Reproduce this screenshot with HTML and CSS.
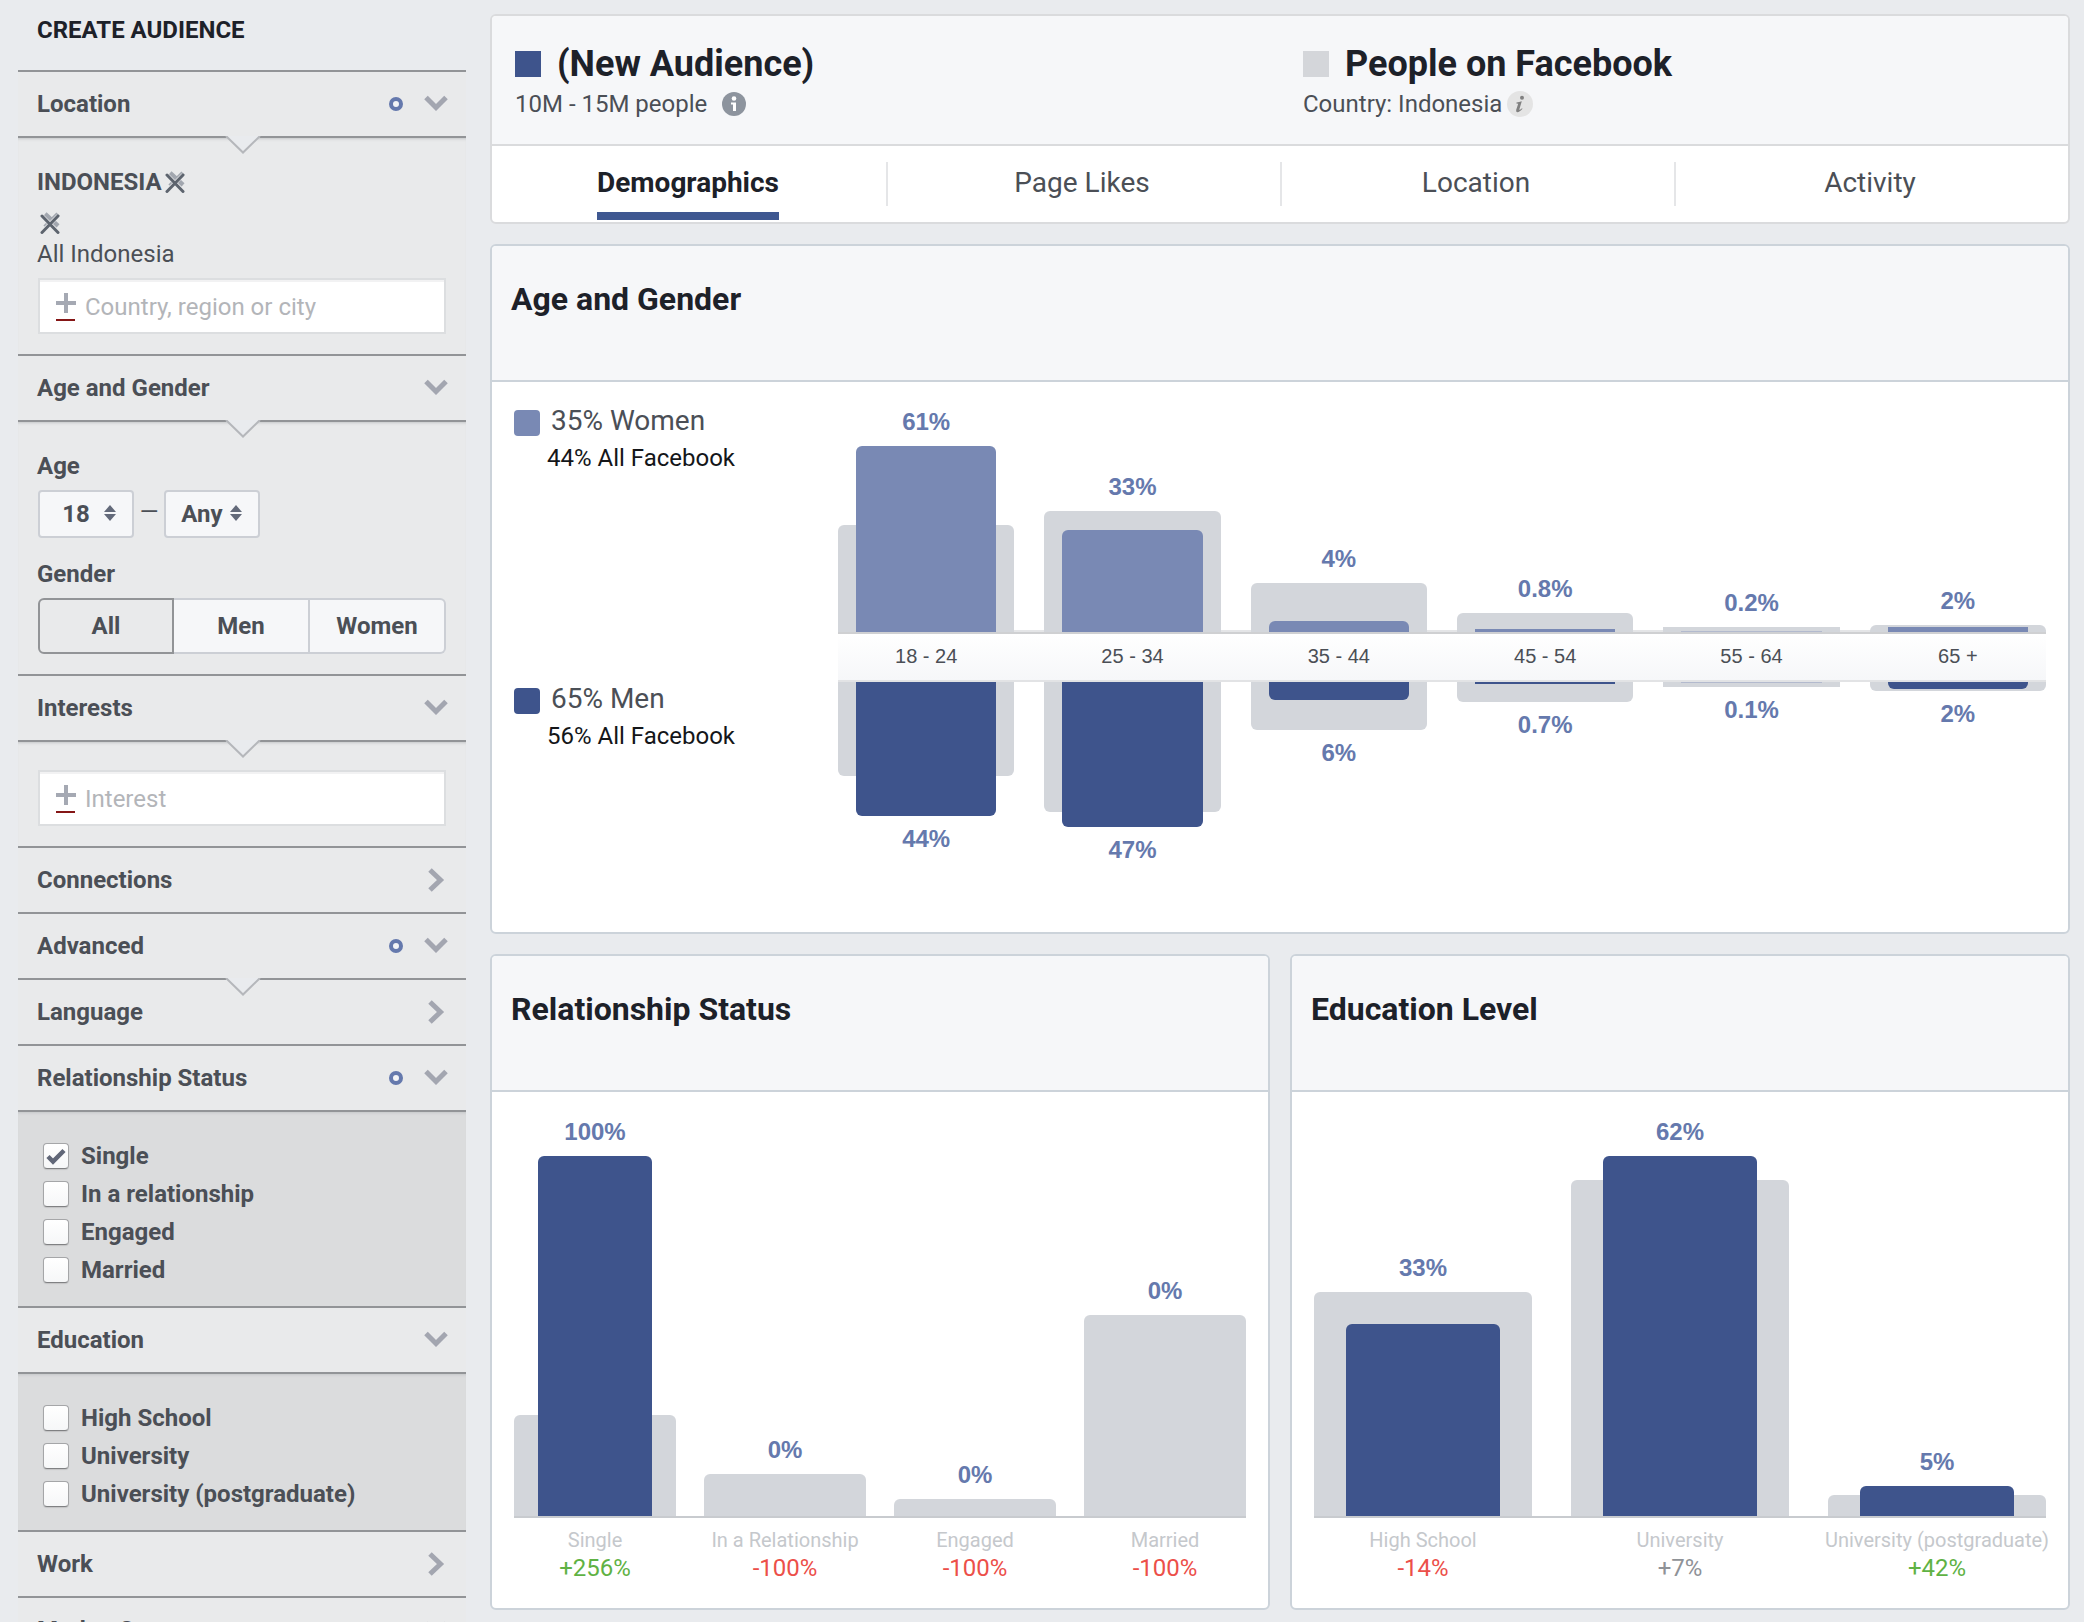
FILE: index.html
```html
<!DOCTYPE html>
<html lang="en">
<head>
<meta charset="utf-8">
<title>Audience Insights</title>
<link rel="stylesheet" href="styles.css">
</head>
<body>
<svg class="sprite" aria-hidden="true">
  <symbol id="down" viewBox="0 0 24 24"><path d="M2 5.500 12 15.500 22 5.500" fill="none" stroke="#a3a6b0" stroke-width="5"/></symbol>
  <symbol id="right" viewBox="0 0 24 24"><path d="M6 2 16.500 12 6 22" fill="none" stroke="#a3a6b0" stroke-width="5"/></symbol>
  <symbol id="ring" viewBox="0 0 14 14"><circle cx="7" cy="7" r="5" fill="#f3f4f7" stroke="#6579ad" stroke-width="4"/></symbol>
  <symbol id="notch" viewBox="0 0 36 20"><path d="M1 0H35V1L18 17 1 1Z" fill="#e9ebee"/><path d="M1 0 18 16.500 35 0" fill="none" stroke="#b5b7bb" stroke-width="2"/></symbol>
  <symbol id="remove" viewBox="0 0 20 22"><path d="M5 2 18 14M18 2 5 15" stroke="#a2a7af" stroke-width="4.500" fill="none"/><path d="M2 4 18 20M18 4 2 20" stroke="#e9eaeb" stroke-width="4" fill="none"/><path d="M2 4 18 20.500M18 4 2 20.500" stroke="#5d646e" stroke-width="3" stroke-linecap="round" fill="none"/></symbol>
  <symbol id="plus" viewBox="0 0 20 28"><path d="M0 10H20M10 0V20" stroke="#a5a9b3" stroke-width="4" fill="none"/><path d="M0 27H19" stroke="#851616" stroke-width="2"/></symbol>
  <symbol id="sort" viewBox="0 0 12 16"><path d="M0 7 6 0 12 7ZM0 9H12L6 16Z" fill="#636a7a"/></symbol>
</svg>
<div class="page">
  <aside class="sidebar">
    <h1 class="sidebar-title">CREATE AUDIENCE</h1>

    <section class="group">
      <button class="group-head open" type="button"><span>Location</span><svg class="ring"><use href="#ring"/></svg><svg class="chevron"><use href="#down"/></svg></button>
      <div class="group-body">
        <svg class="notch"><use href="#notch"/></svg>
        <div class="place"><b>INDONESIA</b><button class="remove" type="button" aria-label="Remove country"><svg><use href="#remove"/></svg></button></div>
        <div class="place place-inner"><button class="remove" type="button" aria-label="Remove region"><svg><use href="#remove"/></svg></button></div>
        <p class="place-name">All Indonesia</p>
        <label class="field"><svg><use href="#plus"/></svg><input type="text" placeholder="Country, region or city" aria-label="Country, region or city"></label>
      </div>
    </section>

    <section class="group">
      <button class="group-head open" type="button"><span>Age and Gender</span><svg class="chevron"><use href="#down"/></svg></button>
      <div class="group-body">
        <svg class="notch"><use href="#notch"/></svg>
        <label class="label" for="age-min">Age</label>
        <div class="ages">
          <span class="select"><select id="age-min"><option>18</option></select><svg><use href="#sort"/></svg></span>
          <span class="dash">—</span>
          <span class="select"><select id="age-max" aria-label="Maximum age"><option>Any</option></select><svg><use href="#sort"/></svg></span>
        </div>
        <p class="label label-next">Gender</p>
        <div class="segments">
          <button class="segment active" type="button">All</button><button class="segment" type="button">Men</button><button class="segment" type="button">Women</button>
        </div>
      </div>
    </section>

    <section class="group">
      <button class="group-head open" type="button"><span>Interests</span><svg class="chevron"><use href="#down"/></svg></button>
      <div class="group-body">
        <svg class="notch"><use href="#notch"/></svg>
        <label class="field"><svg><use href="#plus"/></svg><input type="text" placeholder="Interest" aria-label="Interest"></label>
      </div>
    </section>

    <section class="group">
      <button class="group-head" type="button"><span>Connections</span><svg class="chevron"><use href="#right"/></svg></button>
    </section>
    <section class="group">
      <button class="group-head open" type="button"><span>Advanced</span><svg class="ring"><use href="#ring"/></svg><svg class="chevron"><use href="#down"/></svg></button>
    </section>
    <section class="group nested">
      <svg class="notch"><use href="#notch"/></svg>
      <button class="group-head" type="button"><span>Language</span><svg class="chevron"><use href="#right"/></svg></button>
    </section>

    <section class="group">
      <button class="group-head open" type="button"><span>Relationship Status</span><svg class="ring"><use href="#ring"/></svg><svg class="chevron"><use href="#down"/></svg></button>
      <div class="group-body choices">
        <label class="choice"><input type="checkbox" checked>Single</label>
        <label class="choice"><input type="checkbox">In a relationship</label>
        <label class="choice"><input type="checkbox">Engaged</label>
        <label class="choice"><input type="checkbox">Married</label>
      </div>
    </section>

    <section class="group">
      <button class="group-head open" type="button"><span>Education</span><svg class="chevron"><use href="#down"/></svg></button>
      <div class="group-body choices">
        <label class="choice"><input type="checkbox">High School</label>
        <label class="choice"><input type="checkbox">University</label>
        <label class="choice"><input type="checkbox">University (postgraduate)</label>
      </div>
    </section>

    <section class="group">
      <button class="group-head" type="button"><span>Work</span><svg class="chevron"><use href="#right"/></svg></button>
    </section>
    <section class="group">
      <button class="group-head open" type="button"><span>Market Segments</span><svg class="chevron"><use href="#down"/></svg></button>
    </section>
  </aside>

  <main class="main">
    <section class="card summary">
      <div class="audiences">
        <div class="audience">
          <h2><i class="swatch navy"></i>(New Audience)</h2>
          <p>10M - 15M people<svg class="info" viewBox="0 0 24 24"><circle cx="12" cy="12" r="12" fill="#8d949e"/><circle cx="12" cy="6.500" r="2.300" fill="#fff"/><path d="M9 10.500H14V19H11V12.500H9Z" fill="#fff"/></svg></p>
        </div>
        <div class="audience">
          <h2><i class="swatch grey"></i>People on Facebook</h2>
          <p>Country: Indonesia<svg class="info info-plain" viewBox="0 0 26 26"><circle cx="13" cy="13" r="13" fill="#e4e4e4"/><circle cx="15" cy="6.800" r="2" fill="#808080"/><path d="M9.500 11.500Q12 11 14.800 10.300L12.300 18.500Q12.200 19.500 15 17.200L15.500 17.800Q12.500 21.300 10.300 21.200 8.600 21 9.200 18.800L11.200 12.700 9.400 12.400Z" fill="#808080"/></svg></p>
        </div>
      </div>
      <nav>
        <ul class="tabs">
          <li><a class="current" href="#demographics">Demographics</a></li>
          <li><a href="#likes">Page Likes</a></li>
          <li><a href="#location">Location</a></li>
          <li><a href="#activity">Activity</a></li>
        </ul>
      </nav>
    </section>

    <section class="card" id="demographics">
      <h2 class="card-title">Age and Gender</h2>
      <div class="pyramid">
        <div class="legend legend-women">
          <p class="share"><i class="swatch round women"></i>35% Women</p>
          <p class="overall">44% All Facebook</p>
        </div>
        <div class="ages-chart women-chart">
          <div class="col"><b>61%</b><div class="stack"><i class="bar base" style="height:107px"></i><i class="bar fill" style="height:186px"></i></div></div>
          <div class="col"><b>33%</b><div class="stack"><i class="bar base" style="height:121px"></i><i class="bar fill" style="height:102px"></i></div></div>
          <div class="col"><b>4%</b><div class="stack"><i class="bar base" style="height:49px"></i><i class="bar fill" style="height:11px"></i></div></div>
          <div class="col"><b>0.8%</b><div class="stack"><i class="bar base" style="height:19px"></i><i class="bar fill flat" style="height:3px"></i></div></div>
          <div class="col"><b>0.2%</b><div class="stack"><i class="bar base flat" style="height:5px"></i><i class="bar fill flat faint" style="height:1px"></i></div></div>
          <div class="col"><b>2%</b><div class="stack"><i class="bar base" style="height:7px"></i><i class="bar fill flat" style="height:5px"></i></div></div>
        </div>
        <div class="axis">
          <span>18 - 24</span><span>25 - 34</span><span>35 - 44</span><span>45 - 54</span><span>55 - 64</span><span>65 +</span>
        </div>
        <div class="legend legend-men">
          <p class="share"><i class="swatch round navy"></i>65% Men</p>
          <p class="overall">56% All Facebook</p>
        </div>
        <div class="ages-chart men-chart">
          <div class="col"><div class="stack"><i class="bar base" style="height:94px"></i><i class="bar fill" style="height:134px"></i></div><b>44%</b></div>
          <div class="col"><div class="stack"><i class="bar base" style="height:130px"></i><i class="bar fill" style="height:145px"></i></div><b>47%</b></div>
          <div class="col"><div class="stack"><i class="bar base" style="height:48px"></i><i class="bar fill" style="height:18px"></i></div><b>6%</b></div>
          <div class="col"><div class="stack"><i class="bar base" style="height:20px"></i><i class="bar fill flat" style="height:2px"></i></div><b>0.7%</b></div>
          <div class="col"><div class="stack"><i class="bar base flat" style="height:5px"></i><i class="bar fill flat faint" style="height:1px"></i></div><b>0.1%</b></div>
          <div class="col"><div class="stack"><i class="bar base" style="height:9px"></i><i class="bar fill" style="height:7px"></i></div><b>2%</b></div>
        </div>
      </div>
    </section>

    <div class="pair">
      <section class="card">
        <h2 class="card-title">Relationship Status</h2>
        <div class="chart">
          <div class="plot relationship">
            <div class="col"><b>100%</b><div class="stack"><i class="bar base" style="height:101px"></i><i class="bar fill" style="height:360px"></i></div></div>
            <div class="col"><b>0%</b><div class="stack"><i class="bar base" style="height:42px"></i></div></div>
            <div class="col"><b>0%</b><div class="stack"><i class="bar base" style="height:17px"></i></div></div>
            <div class="col"><b>0%</b><div class="stack"><i class="bar base" style="height:201px"></i></div></div>
          </div>
          <div class="captions relationship">
            <p>Single<span class="up">+256%</span></p>
            <p>In a Relationship<span class="down">-100%</span></p>
            <p>Engaged<span class="down">-100%</span></p>
            <p>Married<span class="down">-100%</span></p>
          </div>
        </div>
      </section>
      <section class="card">
        <h2 class="card-title">Education Level</h2>
        <div class="chart">
          <div class="plot education">
            <div class="col"><b>33%</b><div class="stack"><i class="bar base" style="height:224px"></i><i class="bar fill" style="height:192px"></i></div></div>
            <div class="col"><b>62%</b><div class="stack"><i class="bar base" style="height:336px"></i><i class="bar fill" style="height:360px"></i></div></div>
            <div class="col"><b>5%</b><div class="stack"><i class="bar base" style="height:21px"></i><i class="bar fill" style="height:30px"></i></div></div>
          </div>
          <div class="captions education">
            <p>High School<span class="down">-14%</span></p>
            <p>University<span class="flat-change">+7%</span></p>
            <p>University (postgraduate)<span class="up">+42%</span></p>
          </div>
        </div>
      </section>
    </div>
  </main>
</div>
</body>
</html>
```

FILE: styles.css
```css
* { box-sizing: border-box; }

body {
  margin: 0;
  background: #e9ebee;
  color: #4b4f56;
  font: 24px/32px Roboto, "Liberation Sans", sans-serif;
}

h1, h2, p, ul { margin: 0; padding: 0; }
svg { display: block; flex: none; }
button, input, select { font: inherit; color: inherit; margin: 0; padding: 0; border: 0; background: none; }
button { cursor: pointer; }
.sprite { display: none; }

/* The page fills the window; the columns are cut at its lower edge. */
.page {
  display: grid;
  grid-template-columns: 448px minmax(0, 1fr);
  column-gap: 24px;
  height: 100vh;
  padding: 0 14px 0 18px;
  overflow: hidden;
}

/* Sidebar */
.sidebar-title {
  height: 70px;
  padding: 14px 19px;
  color: #1d2129;
  font-size: 24px;
  line-height: 32px;
}

.group { position: relative; background: #e9eaeb; }

.group-head {
  display: flex;
  align-items: center;
  width: 100%;
  height: 66px;
  padding: 0 18px 0 19px;
  border-top: 2px solid #929497;
  font-weight: 700;
  text-align: left;
}
.group-head span { flex: 1; }
.ring { width: 14px; height: 14px; margin-right: 21px; }
.chevron { width: 24px; height: 24px; }

.group-body {
  position: relative;
  padding: 28px 20px 20px 19px;
  border-top: 2px solid #929497;
  box-shadow: inset 0 3px 3px -2px #c4c6c8;
}

.notch {
  position: absolute;
  top: -2px;
  left: 50%;
  width: 36px;
  height: 20px;
  margin-left: -17px;
}
.nested .notch { top: 0; }

.place { display: flex; align-items: center; gap: 3px; height: 32px; }
.place-inner { height: 22px; margin-top: 14px; padding-left: 3px; }
.remove { width: 20px; height: 22px; }
.remove svg { width: 20px; height: 22px; }
.place-name { margin: 4px 0 8px; }

.field {
  display: flex;
  align-items: center;
  gap: 9px;
  height: 56px;
  margin-left: 1px;
  padding: 2px 16px 0;
  border: 2px solid #dcdee0;
  background: #fff;
  box-shadow: inset 0 2px 0 #f2f2f3;
}
.field svg { width: 20px; height: 28px; }
.field input { flex: 1; min-width: 0; height: 48px; outline: 0; }
.field input::placeholder { color: #b3b5b9; opacity: 1; }

.label { display: block; margin-bottom: 8px; font-weight: 700; }
.label-next { margin-top: 20px; }

.ages { display: flex; gap: 4px; margin-left: 1px; }
.dash { width: 22px; line-height: 44px; text-align: center; }
.select { position: relative; width: 96px; height: 48px; }
.select select {
  appearance: none;
  width: 100%;
  height: 100%;
  padding-right: 20px;
  border: 2px solid #cccfd5;
  border-radius: 4px;
  background: #f6f7f9;
  font-weight: 700;
  text-align: center;
  text-align-last: center;
}
.select svg { position: absolute; top: 15px; right: 18px; width: 12px; height: 16px; pointer-events: none; }

.segments { display: grid; grid-template-columns: repeat(3, 1fr); height: 56px; margin-left: 1px; }
.segment { border: 2px solid #cccfd5; border-left-width: 0; background: #f6f7f9; font-weight: 700; }
.segment:first-child { border-left-width: 2px; border-radius: 6px 0 0 6px; }
.segment:last-child { border-radius: 0 6px 6px 0; }
.segment.active { border-color: #929497; background: #e9eaeb; }

.choices { padding: 25px 25px 17px; background: #dbdcdd; }
.choice { display: flex; align-items: center; gap: 12px; height: 38px; font-weight: 700; }
.choice input {
  appearance: none;
  width: 26px;
  height: 26px;
  border: 1px solid #a5a6a8;
  border-bottom-color: #808183;
  border-radius: 4px;
  background: linear-gradient(#fff, #f6f7f8);
  box-shadow: 0 1px 1px #c2c3c4;
}
.choice input:checked {
  background: url("data:image/svg+xml,%3Csvg xmlns='http://www.w3.org/2000/svg' viewBox='0 0 24 24'%3E%3Cpath d='M4 12.500 9 17.500 20 6.500' fill='none' stroke='%23616778' stroke-width='4.500'/%3E%3C/svg%3E") center / 24px no-repeat, linear-gradient(#fff, #f6f7f8);
}

/* Cards */
.main { display: flex; flex-direction: column; gap: 20px; padding-top: 14px; }
.card { border: 2px solid #ccd3da; border-radius: 6px; background: #fff; }
.card-title {
  padding: 33px 19px 61px;
  border-bottom: 2px solid #ccd3da;
  border-radius: 4px 4px 0 0;
  background: #f6f7f9;
  color: #1d2129;
  font-size: 32px;
  line-height: 40px;
}

.swatch { display: inline-block; flex: none; width: 26px; height: 26px; }
.round { border-radius: 4px; }
.navy { background: #3e548c; }
.women { background: #7989b4; }
.grey { background: #d4d6da; }

.summary { border-color: #dadbdd; }
.audiences {
  display: grid;
  grid-template-columns: 1fr 1fr;
  padding: 28px 0 20px;
  border-bottom: 2px solid #dadbdd;
  border-radius: 4px 4px 0 0;
  background: #f6f7f9;
}
.audience { padding-left: 23px; }
.audience h2 { display: flex; align-items: center; gap: 16px; color: #1d2129; font-size: 36px; line-height: 40px; }
.audience p { display: flex; align-items: center; line-height: 40px; }
.info { width: 24px; height: 24px; margin-left: 15px; }
.info-plain { width: 26px; height: 26px; margin-left: 5px; }

.tabs { display: grid; grid-template-columns: repeat(4, 1fr); list-style: none; }
.tabs li { display: flex; justify-content: center; padding: 0 2px 2px 0; }
.tabs li:not(:first-child) { background: linear-gradient(#e5e6e8, #e5e6e8) left center / 2px 44px no-repeat; }
.tabs a {
  padding: 21px 0 13px;
  border-bottom: 8px solid transparent;
  color: #4b4f56;
  font-size: 28px;
  text-decoration: none;
}
.tabs .current { border-color: #3f5891; color: #1d2129; font-weight: 700; }

/* Charts */
.col { display: flex; flex-direction: column; }
.col b {
  color: #6579ad;
  font: 700 24px/28px "Liberation Sans", Arial, sans-serif;
  text-align: center;
}
.stack { display: grid; align-items: end; }
.bar { grid-area: 1 / 1; border-radius: 6px 6px 0 0; }
.base { background: #d3d6db; }
.fill { background: #3e548c; }

.pyramid {
  display: grid;
  grid-template-columns: 324px minmax(0, 1fr);
  grid-template-rows: 228px 50px 228px;
  padding: 22px;
}
.ages-chart, .axis { display: grid; grid-template-columns: repeat(6, 1fr); column-gap: 30px; }
.pyramid .fill { margin: 0 18px; }
.women-chart { align-items: end; background: linear-gradient(#e4e5e7, #e4e5e7) bottom / 100% 2px no-repeat; }
.women-chart b { margin-bottom: 10px; }
.women-chart .fill { background: #7989b4; }
.men-chart { align-items: start; }
.men-chart b { margin-top: 9px; }
.men-chart .stack { align-items: start; }
.men-chart .bar { border-radius: 0 0 6px 6px; }
.pyramid .flat { border-radius: 0; }
.pyramid .faint { background: #b3bace; }

.axis {
  grid-column: 2;
  border: solid #cfd0d2;
  border-width: 2px 0;
  border-bottom-color: #e2e3e5;
  background: linear-gradient(#fff, #f6f7f9);
  font: 20px/44px "Liberation Sans", Arial, sans-serif;
  text-align: center;
}

.legend { padding-top: 6px; }
.share { display: flex; align-items: flex-start; gap: 11px; height: 26px; font-size: 28px; line-height: 22px; }
.overall { margin-top: 6px; padding-left: 33px; color: #141619; }

.pair { display: grid; grid-template-columns: 1fr 1fr; gap: 20px; }
.chart { padding: 24px 22px 26px; }
.plot { align-items: end; height: 402px; border-bottom: 2px solid #c8cbcf; }
.plot b { margin-bottom: 10px; }
.relationship { display: grid; grid-template-columns: repeat(4, minmax(0, 1fr)); column-gap: 28px; }
.education { display: grid; grid-template-columns: repeat(3, minmax(0, 1fr)); column-gap: 39px; }
.relationship .fill { margin: 0 24px; }
.education .fill { margin: 0 32px; }

.captions { padding-top: 8px; }
.captions p {
  display: flex;
  flex-direction: column;
  align-items: center;
  color: #c5c8cc;
  font-size: 20px;
  line-height: 28px;
  white-space: nowrap;
}
.captions span { font-size: 24px; }
.up { color: #5fb244; }
.down { color: #ec4f49; }
.flat-change { color: #8f9297; }
```
